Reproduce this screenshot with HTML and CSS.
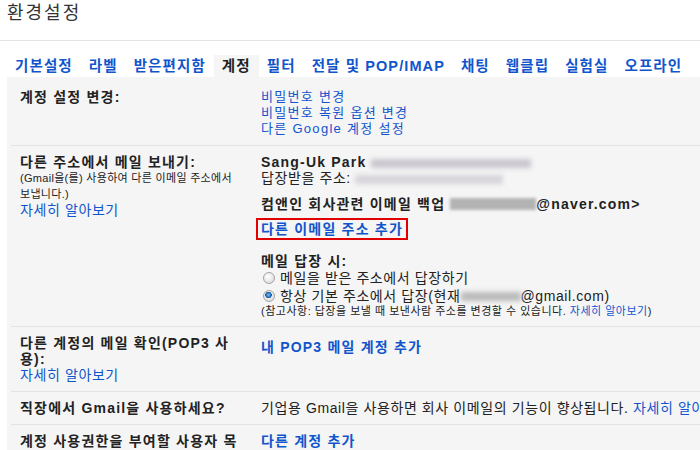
FILE: index.html
```html
<!DOCTYPE html>
<html lang="ko">
<head>
  <meta charset="UTF-8">
  <title>환경설정 - 계정</title>
  <link rel="stylesheet" href="styles.css">
</head>
<body>

  <header class="page-title">환경설정</header>

  <nav class="tabs">
    <a class="tab" href="#">기본설정</a>
    <a class="tab" href="#">라벨</a>
    <a class="tab" href="#">받은편지함</a>
    <span class="tab active">계정</span>
    <a class="tab" href="#">필터</a>
    <a class="tab" href="#">전달 및 POP/IMAP</a>
    <a class="tab" href="#">채팅</a>
    <a class="tab" href="#">웹클립</a>
    <a class="tab" href="#">실험실</a>
    <a class="tab" href="#">오프라인</a>
  </nav>

  <section class="panel">
    <!-- 계정 설정 -->
    <div class="row">
      <div class="label"><b>계정 설정 변경:</b></div>
      <div class="value small-links">
        <a href="#">비밀번호 변경</a>
        <a href="#">비밀번호 복원 옵션 변경</a>
        <a href="#">다른 Google 계정 설정</a>
      </div>
    </div>

    <!-- 다른 주소에서 보내기 -->
    <div class="row">
      <div class="label">
        <b>다른 주소에서 메일 보내기:</b>
        <p class="hint">(Gmail을(를) 사용하여 다른 이메일 주소에서 보냅니다.)</p>
        <a href="#">자세히 알아보기</a>
      </div>
      <div class="value">
        <div><b>Sang-Uk Park</b> <span class="blur blur-name"></span></div>
        <div>답장받을 주소: <span class="blur blur-reply"></span></div>
        <div class="identity"><b>컴앤인 회사관련 이메일 백업 <span class="blur blur-dark"></span>@naver.com&gt;</b></div>
        <a class="add-email" href="#">다른 이메일 주소 추가</a>

        <div class="reply-title"><b>메일 답장 시:</b></div>
        <label class="radio"><input type="radio" name="reply">메일을 받은 주소에서 답장하기</label>
        <label class="radio"><input type="radio" name="reply" checked>항상 기본 주소에서 답장(현재 <span class="blur blur-short"></span>@gmail.com)</label>
        <p class="note">(참고사항: 답장을 보낼 때 보낸사람 주소를 변경할 수 있습니다. <a href="#">자세히 알아보기</a>)</p>
      </div>
    </div>

    <!-- POP3 -->
    <div class="row">
      <div class="label narrow">
        <b>다른 계정의 메일 확인(POP3 사용):</b>
        <a href="#">자세히 알아보기</a>
      </div>
      <div class="value">
        <a class="strong-link pop3" href="#">내 POP3 메일 계정 추가</a>
      </div>
    </div>

    <!-- 직장 -->
    <div class="row">
      <div class="label"><b>직장에서 Gmail을 사용하세요?</b></div>
      <div class="value nowrap">기업용 Gmail을 사용하면 회사 이메일의 기능이 향상됩니다. <a href="#">자세히 알아보기</a></div>
    </div>

    <!-- 사용권한 -->
    <div class="row">
      <div class="label"><b>계정 사용권한을 부여할 사용자 목록:</b></div>
      <div class="value">
        <a class="strong-link" href="#">다른 계정 추가</a>
      </div>
    </div>
  </section>

</body>
</html>
```

FILE: styles.css
```css
:root {
  --link: #1155cc;
  --text: #222;
  --panel: #f5f5f5;
  --line: #e3e3e3;
}
* {
  box-sizing: border-box;
}
html, body {
  overflow: hidden;
}
body {
  margin: 0;
  font-family: "Liberation Sans", "Noto Sans CJK KR", sans-serif;
  font-size: 14px;
  line-height: 16px;
  letter-spacing: 0.6px;
  color: var(--text);
  background: #fff;
}
a {
  color: var(--link);
  text-decoration: none;
}
b {
  letter-spacing: 1.2px;
}

/* title */
.page-title {
  height: 41px;
  padding: 1px 0 0 7px;
  font-size: 18px;
  line-height: 24px;
  letter-spacing: 2px;
  color: #333;
  border-bottom: 1px solid var(--line);
}

/* tabs */
.tabs {
  display: flex;
  margin: 14px 0 0 7px;
  white-space: nowrap;
}
.tab {
  padding: 3px 8px;
  font-size: 14.5px;
  font-weight: bold;
  letter-spacing: 1.1px;
  color: var(--link);
}
.tab.active {
  background: var(--panel);
  color: var(--text);
}

/* panel */
.panel {
  margin-left: 7px;
  padding: 4px 0 0 4px;
  background: var(--panel);
  min-height: 400px;
}
.row {
  display: grid;
  grid-template-columns: 241px 1fr;
  padding: 8px 0 8px 9px;
  border-bottom: 1px solid var(--line);
}
.row:last-child {
  border-bottom: none;
}
.label {
  padding-right: 14px;
}
.label.narrow {
  padding-right: 25px;
}
.label a {
  display: block;
}
.hint {
  margin: 0;
  padding-right: 2px;
  font-size: 11px;
  letter-spacing: 0.3px;
}
.small-links {
  font-size: 13px;
  letter-spacing: 1.3px;
}
.small-links a {
  display: block;
}
.nowrap {
  white-space: nowrap;
}

/* blurred addresses */
.blur {
  display: inline-block;
  height: 9px;
  vertical-align: -1px;
  background: #c9c6cf;
  filter: blur(2.5px);
}
.blur-name {
  width: 160px;
}
.blur-reply {
  width: 148px;
  background: #d6d3da;
}
.blur-short {
  width: 60px;
  background: #b9b9b9;
}
.blur-dark {
  width: 86px;
  height: 12px;
  background: #b3b3b3;
  filter: blur(1.5px);
}

.identity {
  margin-top: 10px;
}
.add-email {
  display: block;
  width: fit-content;
  margin: 8px 0 0 -3px;
  padding: 1px 3px;
  font-weight: bold;
  letter-spacing: 1.2px;
  outline: 2px solid #e00000;
}
.reply-title {
  margin-top: 15px;
}
.radio {
  display: flex;
  align-items: center;
  height: 18px;
}
.radio input {
  appearance: none;
  flex: none;
  width: 12px;
  height: 12px;
  margin: 0 5px 0 2px;
  border: 1px solid #a3a3a3;
  border-radius: 50%;
  background: radial-gradient(circle at 40% 35%, #fff 0, #e6e6e6 60%, #cfcfcf 100%);
}
.radio input:checked {
  background:
    radial-gradient(circle at 45% 40%, #7cc0f0 0, #2a7fc8 2px, #1b4f8a 3px, transparent 3.5px),
    radial-gradient(circle at 40% 35%, #fff 0, #e6e6e6 60%, #cfcfcf 100%);
}
.note {
  margin: 0;
  font-size: 11px;
  line-height: 13px;
  letter-spacing: 0.5px;
}
.strong-link {
  display: block;
  font-weight: bold;
  letter-spacing: 1.2px;
}
.pop3 {
  margin-top: 4px;
}
```
